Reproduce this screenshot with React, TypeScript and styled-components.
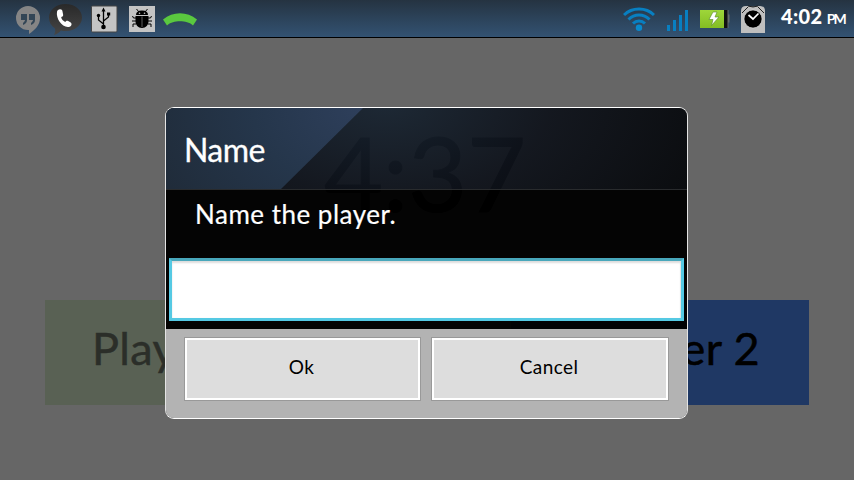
import React from 'react';
import styled, { createGlobalStyle } from 'styled-components';

const GlobalStyle = createGlobalStyle`
  * { box-sizing: border-box; }
  body { margin: 0; overflow: hidden; background: #666; font-family: Lato, "Liberation Sans", sans-serif; }
`;

const Screen = styled.div`
  width: 854px;
  height: 480px;
  position: relative;
  display: flex;
  flex-direction: column;
  background: #666;
  overflow: hidden;
`;

const StatusBar = styled.header`
  height: 38px;
  flex: none;
  display: flex;
  justify-content: space-between;
  padding: 0 8px 0 16px;
  background: linear-gradient(#253341, #2c435a 50%, #335272);
  border-bottom: 1px solid #000;
`;

const IconGroup = styled.div`
  display: flex;
  height: 37px;
`;

const Icon = styled.svg<{ $after?: number }>`
  display: block;
  flex: none;
  height: 37px;
  margin-right: ${p => p.$after ?? 0}px;
`;

const Time = styled.div`
  display: flex;
  align-items: baseline;
  width: 65px;
  height: 37px;
  line-height: 33px;
  color: #fff;
  font-size: 20px;
  font-weight: 900;
  letter-spacing: 0.4px;
  white-space: nowrap;
`;

const Meridiem = styled.span`
  margin-left: 4px;
  font-size: 14px;
  font-weight: 700;
  letter-spacing: -1.8px;
`;

const Game = styled.main`
  flex: 1;
  display: flex;
  flex-direction: column;
  padding: 87px 45px 0;
`;

const Clock = styled.div`
  height: 175px;
  padding-left: 279px;
  line-height: 96px;
  font-size: 102px;
  letter-spacing: -0.3px;
  color: #000;
  -webkit-text-stroke: 1px #000;
  white-space: nowrap;
`;

const Players = styled.div`
  display: flex;
  justify-content: space-between;
`;

const PlayerButton = styled.div<{ $bg: string; $color: string; $end?: boolean }>`
  width: 298px;
  height: 105px;
  display: flex;
  align-items: center;
  justify-content: ${p => (p.$end ? 'flex-end' : 'flex-start')};
  padding: 0 49px 9px 47px;
  background: ${p => p.$bg};
  color: ${p => p.$color};
  font-size: 45px;
  letter-spacing: 0.4px;
  -webkit-text-stroke: 0.5px ${p => p.$color};
  white-space: pre;
`;

const Overlay = styled.div`
  position: absolute;
  inset: 38px 0 0;
  display: flex;
  justify-content: center;
  align-items: flex-start;
  padding: 69px 1px 0 0;
`;

const Dialog = styled.section`
  width: 523px;
  height: 312px;
  display: flex;
  flex-direction: column;
  border: 1px solid #fff;
  border-left-color: #e4e4e4;
  border-right-color: #e4e4e4;
  border-radius: 9px;
  overflow: hidden;
`;

const DialogHeader = styled.div`
  position: relative;
  height: 82px;
  flex: none;
  display: flex;
  align-items: center;
  padding: 2px 0 0 18px;
  border-bottom: 1px solid #292b2d;
  background: radial-gradient(ellipse 330px 190px at 220px -5px, rgba(25, 37, 50, 0.94), rgba(14, 18, 26, 0.935) 50%, rgba(6, 8, 11, 0.945));
`;

const Sheen = styled.div`
  position: absolute;
  inset: 0;
  background: radial-gradient(ellipse 240px 180px at 195px 0, #2e3f5b, #25364b 45%, #1f2a37);
  clip-path: polygon(0 0, 197px 0, 115px 100%, 0 100%);
`;

const Title = styled.h1`
  position: relative;
  margin: 0;
  color: #fff;
  font-size: 32px;
  font-weight: 400;
  letter-spacing: -0.6px;
  -webkit-text-stroke: 0.3px #fff;
`;

const DialogBody = styled.div`
  height: 139px;
  flex: none;
  display: flex;
  flex-direction: column;
  padding: 7px 3px 8px;
  background: rgba(0, 0, 0, 0.955);
`;

const Message = styled.p`
  height: 62px;
  margin: 0;
  padding-left: 26px;
  line-height: 34px;
  color: #fff;
  font-size: 26px;
  letter-spacing: 0.5px;
  -webkit-text-stroke: 0.2px #fff;
  white-space: nowrap;
`;

const NameInput = styled.input`
  display: block;
  width: 515px;
  height: 63px;
  padding: 0 10px;
  font: inherit;
  font-size: 24px;
  border: 3px solid #55c9e3;
  border-top-color: #48a7bb;
  border-radius: 0;
  outline: none;
  background: #fff;
  box-shadow: inset 0 2px 2px #ddd, inset -1px 0 1px #e6e6e6;
`;

const Actions = styled.div`
  flex: 1;
  display: grid;
  grid-template-columns: 237px 238px;
  column-gap: 10px;
  padding: 8px 18px 0;
  background: #b3b3b3;
`;

const ActionButton = styled.button`
  height: 64px;
  padding: 0 2px 5px 0;
  border: 1px solid #999;
  border-radius: 0;
  background: #ddd;
  box-shadow: inset 0 0 0 2px #fff;
  color: #000;
  font: 19px Lato, "Liberation Sans", sans-serif;
  letter-spacing: 0.4px;
`;

function Notifications() {
  return (
    <IconGroup>
      <Icon width="24" viewBox="16 0 24 37" $after={9}>
        <path d="M28 6a12 12 0 0 1 12 12c0 7-5 12-11 16v-4h-1a12 12 0 0 1 0-24Z" fill="#858585" />
        <path d="M21 14h6v6c0 3-2 4-4 5v-2c1-1 2-2 2-3h-4Zm8 0h6v6c0 3-2 4-4 5v-2c1-1 2-2 2-3h-4Z" fill="#334656" />
      </Icon>
      <Icon width="33" viewBox="49 0 33 37" $after={9}>
        <defs>
          <linearGradient id="bubble" x2="0" y2="1"><stop stopColor="#292929" /><stop offset="1" stopColor="#464646" /></linearGradient>
        </defs>
        <path d="M65.500 4C75 4 82 10 82 17.500S75 31 66 31c-2 0-4 0-5-.5-2 2-4 3.500-7 4.500 1-2 1.500-4 1-6.500-4-2.500-6-6.500-6-11C49 10 56 4 65.500 4Z" fill="url(#bubble)" />
        <path d="M58 10c2-1.500 4.500-.5 4.500 1.500l.7 3.500c0 1-1 2-2 2 0 2 2 4 4 5 1-1.500 2-1.500 3-1l2.500 1.500c1.500 1 1 3.500-1 4.200-7 2-14-8-12.700-15 .1-.7.500-1.300 1-1.700Z" fill="#fff" />
      </Icon>
      <Icon width="27" viewBox="91 0 27 37" $after={11}>
        <rect x="91.500" y="6" width="25.500" height="26" rx="1" fill="#c4c4c4" stroke="#444" />
        <g fill="none" stroke="#000" strokeWidth="1.3">
          <path d="M103.500 10v17M103.500 24l-5-4v-4M103.500 21l5-4v-3" />
        </g>
        <path d="m103.500 7.500 2 4h-4ZM107 12.500h3.200v3h-3.200Z" />
        <circle cx="98.500" cy="15.500" r="1.700" /><circle cx="103.500" cy="27" r="2.300" />
      </Icon>
      <Icon width="26" viewBox="129 0 26 37" $after={8}>
        <rect x="129" y="6" width="26" height="26" fill="#c4c4c4" />
        <path d="M136 15c0-3 2-4.500 6-4.500s6 1.500 6 4.500ZM135.500 16H148.500v5c0 4-2.500 7-6.500 7s-6.500-3-6.500-7Z" />
        <path d="m139 12-2.500-3M145 12l2.500-3M136 18h-2.500l-1-2M148 18h2.500l1-2M136 21h-4M148 21h4M136 24h-3v3M148 24h3v3" fill="none" stroke="#000" strokeWidth="1" />
        <path d="M142 16.500V27" stroke="#777" strokeWidth=".8" />
        <circle cx="139.500" cy="13.200" r=".8" fill="#c4c4c4" /><circle cx="144.500" cy="13.200" r=".8" fill="#c4c4c4" />
      </Icon>
      <Icon width="34" viewBox="163 0 34 37">
        <path d="M163 19.500c10-8.500 24-8.500 34 0l-4 6c-2-2-4-2.500-6-3.200-4-1.400-10-1.400-14 0-2 .7-4 1.200-6 3.200Z" fill="#5ac83f" />
      </Icon>
    </IconGroup>
  );
}

function SystemStatus() {
  return (
    <IconGroup>
      <Icon width="32" viewBox="623 0 32 37" $after={12}>
        <g fill="none" stroke="#087fc1" strokeWidth="3">
          <path d="M624 15c8-8 22-8 30 0M628.500 19.500c6-6 15-6 21 0M633 23.500c3.500-3.500 8.500-3.500 12 0" />
        </g>
        <circle cx="639" cy="27.700" r="3.200" fill="#0989cc" />
      </Icon>
      <Icon width="21" viewBox="667 0 21 37" $after={12}>
        <path d="M667 25h3v6h-3Zm6-5h3v11h-3Zm6-5h3v16h-3Zm6-5h3v21h-3Z" fill="#087fc1" />
      </Icon>
      <Icon width="30" viewBox="700 0 30 37" $after={11}>
        <defs>
          <linearGradient id="charge" x2="0" y2="1"><stop stopColor="#9ed63a" /><stop offset="1" stopColor="#83bd23" /></linearGradient>
        </defs>
        <path d="M727 10h1.500v4.500h1v8h-1V28H727Z" fill="#656b6e" />
        <rect x="700" y="10" width="24" height="18" fill="url(#charge)" />
        <rect x="724" y="10" width="3.500" height="18" fill="#111" />
        <path d="m713 12-4 7.500h4l-1.500 6 7.500-8.500h-4l2-5Z" fill="#fff" stroke="#588829" strokeWidth=".6" />
      </Icon>
      <Icon width="24" viewBox="741 0 24 37" $after={16}>
        <path d="M741 33V11q0-5 5-5h2q5 1.500 10 0h2q5 0 5 5v22Z" fill="#bfbfbf" />
        <path d="m742 13 6-6M764 13l-6-6M748 6q5 2 10 0" fill="none" stroke="#222" strokeWidth="1" />
        <circle cx="753" cy="19" r="9" fill="#000" stroke="#ddd" strokeWidth=".6" />
        <path d="m748.500 15 4.500 4 5.500-5.500" fill="none" stroke="#fff" strokeWidth="1.700" />
      </Icon>
      <Time>4:02<Meridiem>PM</Meridiem></Time>
    </IconGroup>
  );
}

export default function App() {
  return (
    <>
      <GlobalStyle />
      <Screen>
        <StatusBar>
          <Notifications />
          <SystemStatus />
        </StatusBar>
        <Game>
          <Clock>4:37</Clock>
          <Players>
            <PlayerButton $bg="#596154" $color="#2b2e29">Player 1</PlayerButton>
            <PlayerButton $bg="#1f3864" $color="#000" $end>Player 2</PlayerButton>
          </Players>
        </Game>
        <Overlay>
          <Dialog role="dialog">
            <DialogHeader>
              <Sheen />
              <Title>Name</Title>
            </DialogHeader>
            <DialogBody>
              <Message>Name the player.</Message>
              <NameInput aria-label="Player name" />
            </DialogBody>
            <Actions>
              <ActionButton>Ok</ActionButton>
              <ActionButton>Cancel</ActionButton>
            </Actions>
          </Dialog>
        </Overlay>
      </Screen>
    </>
  );
}
